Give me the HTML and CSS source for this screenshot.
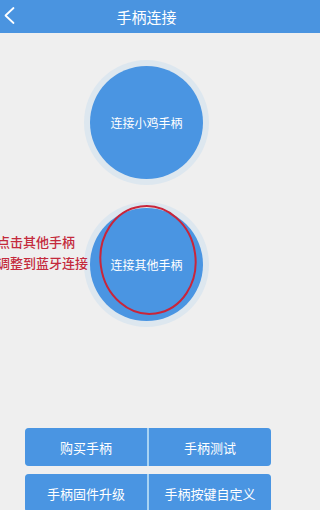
FILE: index.html
```html
<!DOCTYPE html>
<html lang="zh">
<head>
<meta charset="utf-8">
<link rel="stylesheet" href="styles.css">
</head>
<body>
<header class="topbar">
  <div class="topbar-inner">
    <svg class="back" width="16" height="20" viewBox="0 0 16 20"><path d="M13.5 2 L5.5 9.5 L13.5 17" fill="none" stroke="#ffffff" stroke-width="1.8" stroke-linecap="round" stroke-linejoin="round"/></svg>
    <h1 class="title">手柄连接</h1>
  </div>
</header>
<div class="page">
  <main class="content">
    <div class="halo"><div class="circle">连接小鸡手柄</div></div>
    <div class="halo halo-second">
      <div class="circle">连接其他手柄</div>
      <svg class="mark" width="104" height="114" viewBox="0 0 104 114"><ellipse cx="52" cy="57" rx="47.5" ry="54" transform="rotate(-8 52 57)" fill="none" stroke="#c9253a" stroke-width="2"/></svg>
    </div>
    <div class="note">点击其他手柄<br>调整到蓝牙连接</div>
  </main>
  <section class="actions">
    <div class="row"><div class="btn">购买手柄</div><div class="btn">手柄测试</div></div>
    <div class="row"><div class="btn">手柄固件升级</div><div class="btn">手柄按键自定义</div></div>
  </section>
</div>
</body>
</html>
```
FILE: styles.css
```css
html, body {
  margin: 0;
  padding: 0;
  background: #efefef;
  font-family: "Noto Sans CJK SC", "Noto Sans", sans-serif;
  overflow: hidden;
}
.topbar {
  height: 33px;
  background: #4a94e0;
}
.topbar-inner {
  width: 293px;
  height: 33px;
  display: flex;
  align-items: center;
  justify-content: center;
  position: relative;
}
.page {
  width: 293px;
  height: 477px;
  overflow: hidden;
  display: flex;
  flex-direction: column;
}
.back {
  position: absolute;
  left: 0;
  top: 6px;
}
.title {
  margin: 0;
  color: #ffffff;
  font-size: 15px;
  font-weight: 400;
  line-height: 33px;
}
.content {
  position: relative;
  display: flex;
  flex-direction: column;
  align-items: center;
  padding-top: 27px;
  gap: 17px;
}
.halo {
  width: 125px;
  height: 125px;
  border-radius: 50%;
  background: #dde7ef;
  display: flex;
  align-items: center;
  justify-content: center;
  position: relative;
}
.circle {
  width: 113px;
  height: 113px;
  border-radius: 50%;
  background: #4a95e2;
  color: #ffffff;
  font-size: 12px;
  display: flex;
  align-items: center;
  justify-content: center;
}
.mark {
  position: absolute;
  left: 12px;
  top: 1px;
}
.note {
  position: absolute;
  left: -3px;
  top: 198px;
  color: #c42a3c;
  font-size: 13px;
  line-height: 21px;
  font-weight: 500;
}
.actions {
  margin-top: 101px;
  padding: 0 22px 0 25px;
  display: flex;
  flex-direction: column;
  gap: 8px;
}
.row {
  display: flex;
  height: 38px;
  border-radius: 4px;
  overflow: hidden;
  background: #a8d3f3;
  gap: 2px;
}
.btn {
  flex: 1;
  background: #4a95e2;
  color: #ffffff;
  font-size: 13px;
  display: flex;
  align-items: center;
  justify-content: center;
}
```
